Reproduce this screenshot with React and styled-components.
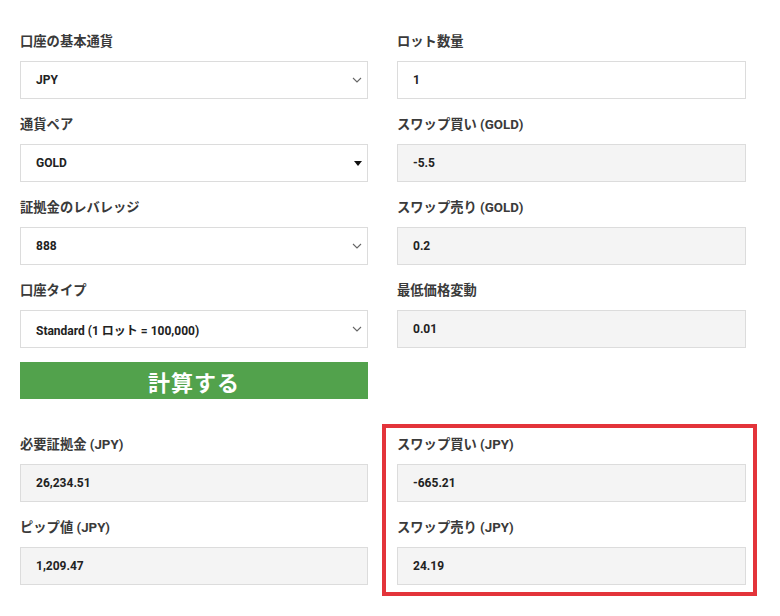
import React from 'react';
import styled, { createGlobalStyle } from 'styled-components';

const GlobalStyle = createGlobalStyle`
  * { box-sizing: border-box; }
  body {
    margin: 0;
    background: #ffffff;
    font-family: Roboto, "Noto Sans CJK JP", sans-serif;
  }
`;

const Chevron = () => (
  <svg width="10" height="6" viewBox="0 0 10 6" fill="none">
    <path d="M1 1l4 4 4-4" stroke="#666" strokeWidth="1.1" />
  </svg>
);

const Caret = () => (
  <svg width="8" height="5" viewBox="0 0 8 5">
    <path d="M0 0h8L4 5z" fill="#111" />
  </svg>
);

export default function App() {
  return (
    <>
      <GlobalStyle />
      <Page>
        <Grid>
          <Column>
            <Field>
              <Label>口座の基本通貨</Label>
              <Select>
                <Value>JPY</Value>
                <Chevron />
              </Select>
            </Field>
            <Field>
              <Label>通貨ペア</Label>
              <Select>
                <Value>GOLD</Value>
                <Caret />
              </Select>
            </Field>
            <Field>
              <Label>証拠金のレバレッジ</Label>
              <Select>
                <Value>888</Value>
                <Chevron />
              </Select>
            </Field>
            <Field>
              <Label>口座タイプ</Label>
              <Select>
                <Value>Standard (1 ロット = 100,000)</Value>
                <Chevron />
              </Select>
            </Field>
            <CalcButton type="button">計算する</CalcButton>
          </Column>
          <Column>
            <Field>
              <Label>ロット数量</Label>
              <Box>
                <Value>1</Value>
              </Box>
            </Field>
            <Field>
              <Label>スワップ買い (GOLD)</Label>
              <Box readOnly>
                <Value>-5.5</Value>
              </Box>
            </Field>
            <Field>
              <Label>スワップ売り (GOLD)</Label>
              <Box readOnly>
                <Value>0.2</Value>
              </Box>
            </Field>
            <Field>
              <Label>最低価格変動</Label>
              <Box readOnly>
                <Value>0.01</Value>
              </Box>
            </Field>
          </Column>
        </Grid>

        <Results>
          <Column>
            <Field>
              <Label>必要証拠金 (JPY)</Label>
              <Box readOnly>
                <Value>26,234.51</Value>
              </Box>
            </Field>
            <Field>
              <Label>ピップ値 (JPY)</Label>
              <Box readOnly>
                <Value>1,209.47</Value>
              </Box>
            </Field>
          </Column>
          <Highlight>
            <Field>
              <Label>スワップ買い (JPY)</Label>
              <Box readOnly>
                <Value>-665.21</Value>
              </Box>
            </Field>
            <Field>
              <Label>スワップ売り (JPY)</Label>
              <Box readOnly>
                <Value>24.19</Value>
              </Box>
            </Field>
          </Highlight>
        </Results>
      </Page>
    </>
  );
}

const Page = styled.div`
  width: 780px;
  height: 616px;
  padding: 32px 34px 0 20px;
  overflow: hidden;
`;

const Grid = styled.div`
  display: grid;
  grid-template-columns: 348px 349px;
  column-gap: 29px;
  align-items: start;
`;

const Results = styled(Grid)`
  margin-top: 36px;
`;

const Column = styled.div`
  display: flex;
  flex-direction: column;
  gap: 16px;
`;

const Highlight = styled(Column)`
  border: 4px solid #e3343a;
  margin: -11px -11px -11px -15px;
  padding: 7px 7px 7px 11px;
`;

const Field = styled.div`
  display: flex;
  flex-direction: column;
`;

const Label = styled.div`
  height: 20px;
  line-height: 20px;
  margin-bottom: 9px;
  font-size: 13.3px;
  font-weight: 700;
  color: #3a3a3a;
  white-space: nowrap;
`;

const Box = styled.div`
  height: 38px;
  display: flex;
  align-items: center;
  padding: 0 15px;
  border: 1px solid #dcdcdc;
  background: ${(p) => (p.readOnly ? '#f4f4f4' : '#ffffff')};
`;

const Select = styled(Box)`
  justify-content: space-between;
  padding-right: 5px;
  svg { margin-right: 0; }
`;

const Value = styled.span`
  font-size: 12px;
  font-weight: 700;
  color: #222;
`;

const CalcButton = styled.button`
  height: 37px;
  margin-top: -2px;
  border: none;
  background: #52a24c;
  color: #ffffff;
  font-family: "Noto Sans CJK JP", sans-serif;
  font-size: 22px;
  font-weight: 700;
  letter-spacing: 1px;
  cursor: pointer;
`;
